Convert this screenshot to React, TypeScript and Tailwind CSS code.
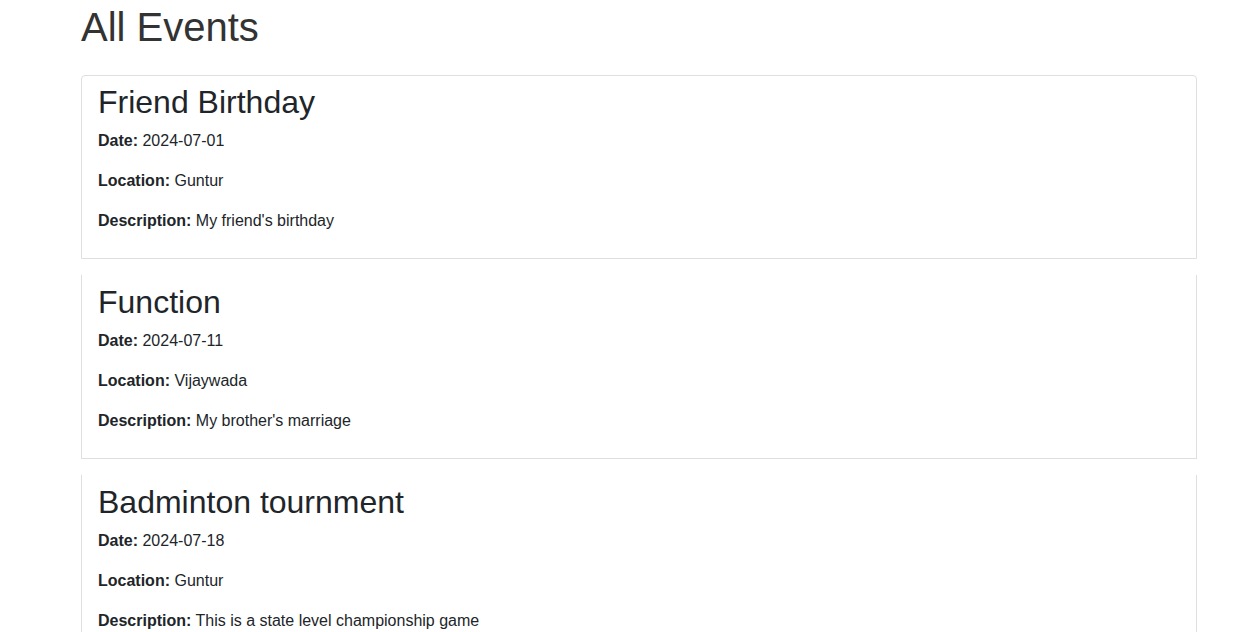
import React from "react";

const events = [
  { title: "Friend Birthday", date: "2024-07-01", location: "Guntur", description: "My friend's birthday" },
  { title: "Function", date: "2024-07-11", location: "Vijaywada", description: "My brother's marriage" },
  { title: "Badminton tournment", date: "2024-07-18", location: "Guntur", description: "This is a state level championship game" },
];

export default function App() {
  return (
    <div
      className="bg-white text-[#212529] min-h-[632px]"
      style={{ fontFamily: '"Liberation Sans", Arial, sans-serif' }}
    >
      <div className="ml-[81px] w-[1116px] pt-[3px]">
        <h1 className="text-[40px] leading-[48px] font-medium mb-6 text-[#333]">All Events</h1>
        <div className="flex flex-col gap-4">
          {events.map((e, i) => (
            <div
              key={e.title}
              className={
                i === 0
                  ? "border border-[#dfdfdf] rounded-t-[4px] pt-[7px] pb-[9px] px-4"
                  : "border border-t-0 border-[#dfdfdf] pt-2 pb-[9px] px-4"
              }
            >
              <h2 className="text-[32px] leading-[38px] font-medium mb-2">{e.title}</h2>
              <p className="text-base leading-6 mb-4">
                <strong className="font-bold">Date:</strong> {e.date}
              </p>
              <p className="text-base leading-6 mb-4">
                <strong className="font-bold">Location:</strong> {e.location}
              </p>
              <p className="text-base leading-6 mb-4">
                <strong className="font-bold">Description:</strong> {e.description}
              </p>
            </div>
          ))}
        </div>
      </div>
    </div>
  );
}
